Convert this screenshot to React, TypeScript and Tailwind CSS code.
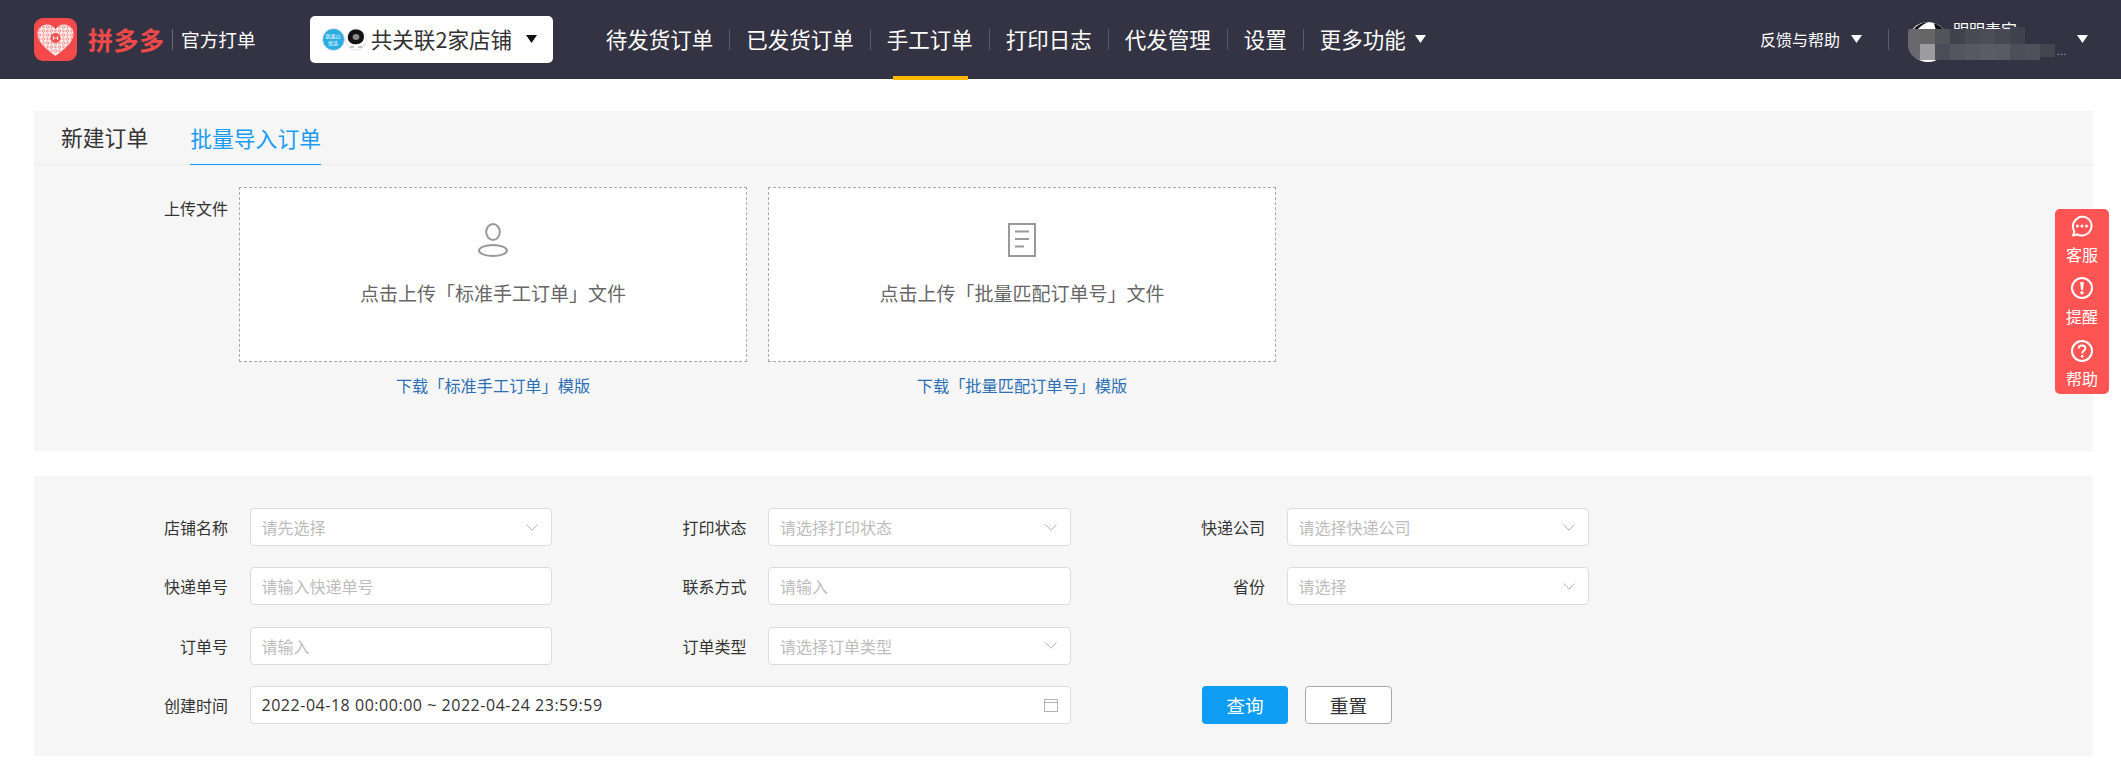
import React from 'react';

const Tri = ({ className = '', color = '#fff' }: { className?: string; color?: string }) => (
  <svg width="11" height="8" viewBox="0 0 11 8" className={className}>
    <polygon points="0,0 11,0 5.5,8" fill={color} />
  </svg>
);

const Chevron = () => (
  <svg width="12" height="7" viewBox="0 0 12 7" className="shrink-0" fill="none" stroke="#b4b4b4" strokeWidth="1">
    <path d="M0.5 0.5 L6 6.2 L11.5 0.5" />
  </svg>
);

const Logo = () => {
  const dots: React.ReactNode[] = [];
  for (let r = 0; r < 7; r++) {
    for (let c = 0; c < 9; c++) {
      const cx = 5.5 + c * 4;
      const cy = 9 + r * 4;
      dots.push(<circle key={`${r}-${c}`} cx={cx} cy={cy} r={(r + c) % 2 ? 0.8 : 1.3} fill="none" stroke="#f3605c" strokeWidth="0.6" />);
    }
  }
  return (
    <svg width="43" height="43" viewBox="0 0 43 43" className="shrink-0">
      <rect width="43" height="43" rx="9" fill="#f4494a" />
      <clipPath id="hrt">
        <path d="M21.5 38 C16 33.5 3.5 26 3.5 15.5 C3.5 10 8 6.5 13 6.5 C16.5 6.5 19.7 8.4 21.5 11 C23.3 8.4 26.5 6.5 30 6.5 C35 6.5 39.5 10 39.5 15.5 C39.5 26 27 33.5 21.5 38 Z" />
      </clipPath>
      <g clipPath="url(#hrt)">
        <rect width="43" height="43" fill="#fdeae8" />
        {dots}
        <circle cx="21.5" cy="20" r="5" fill="#f0524f" />
        <path d="M19.5 18 V22 M23.5 18 V22 M18.5 20 H24.5" stroke="#fde4e1" strokeWidth="0.9" />
      </g>
    </svg>
  );
};

const ShopAvatars = () => (
  <div className="flex items-center shrink-0">
    <div className="w-[23px] h-[23px] rounded-full bg-[#2aade3] border border-[#e6e6e6] flex flex-col items-center justify-center text-white text-[5px] leading-[7px]">
      <span>蔬果山</span>
      <span>优选</span>
    </div>
    <svg width="22" height="23" viewBox="0 0 22 23" className="shrink-0">
      <circle cx="11" cy="11.5" r="10.5" fill="#fff" stroke="#e4e4e4" />
      <path d="M3 8 C4 2 9 1 12 1.5 C18 2 20 7 18.5 11.5 C17 16 11 17 8 16 C4.5 15 2 11.5 3 8 Z" fill="#111" />
      <ellipse cx="11" cy="9" rx="3.4" ry="3" fill="#8a8a8a" />
      <path d="M5 19 H9 M13 19 H17" stroke="#888" strokeWidth="1.2" />
    </svg>
  </div>
);

const Mosaic = () => {
  const row1 = ['#666666', '#53535a', '#42424f', '#4a4a56', '#4d4d59', '#484855', '#42424f'];
  const row2 = ['#9c9ca0', '#4c4c58', '#55555f', '#585862', '#5c5c66', '#5a5a64', '#4e4e5a', '#50505c', '#45454f'];
  return (
    <svg width="150" height="34" viewBox="0 0 150 34" className="absolute left-0 top-[27px]">
      <path d="M12 2 H0.5 C-0.5 8 0 12 0 17 C0 24 3 30 12 33 Z" fill="#68686e" />
      {row1.map((c, i) => (
        <rect key={i} x={12 + i * 15} y={i > 5 ? 0 : 2} width="15" height={i > 5 ? 17 : 15} fill={c} />
      ))}
      {row2.map((c, i) => (
        <rect key={i} x={12 + i * 15} y="17" width="15" height={i === 8 ? 13 : 16} fill={c} />
      ))}
    </svg>
  );
};

const navItems = ['待发货订单', '已发货订单', '手工订单', '打印日志', '代发管理', '设置'];

const Header = () => (
  <header className="h-[79px] bg-[#343343] flex items-center pl-[34px] pr-[33px] pb-px text-white">
    <Logo />
    <span className="ml-[11px] text-[25px] leading-[25px] font-bold text-[#ee4a4a] w-[76px] whitespace-nowrap tracking-[0.5px]">拼多多</span>
    <span className="ml-[8px] w-px h-[21px] bg-[#6a6a76]" />
    <span className="ml-[8px] text-[18.67px] leading-[24px] whitespace-nowrap">官方打单</span>
    <div className="ml-[54px] w-[243px] h-[47px] bg-white rounded-[5px] flex items-center pl-[12px] text-[#333]">
      <ShopAvatars />
      <span className="ml-[4px] text-[21.6px] leading-[28px] whitespace-nowrap">共关联2家店铺</span>
      <Tri className="ml-[14px]" color="#111" />
    </div>
    <nav className="ml-[37px] flex items-center">
      {navItems.map((t, i) => (
        <div key={t} className="relative px-4 h-[21px] flex items-center text-[21.5px] border-r border-[#5d5d6a] whitespace-nowrap">
          {t}
          {i === 2 && <span className="absolute left-[22px] right-[21px] top-[47px] h-1 bg-[#ffba00]" />}
        </div>
      ))}
      <div className="pl-4 flex items-center text-[21.5px] whitespace-nowrap">
        更多功能
        <Tri className="ml-[9px]" />
      </div>
    </nav>
    <div className="ml-auto flex items-center text-[16px] whitespace-nowrap">
      <span>反馈与帮助</span>
      <Tri className="ml-[11px]" />
      <span className="ml-[26px] w-px h-[21px] bg-[#5d5d6a]" />
      <div className="relative ml-[19px] w-[170px] h-[79px] flex items-start">
        <svg width="40" height="40" viewBox="0 0 40 40" className="absolute left-0 top-[22px]">
          <circle cx="20" cy="20" r="20" fill="#fff" />
          <path d="M2 14 C5 5 12 1 20 0 C14 3 9 6 6 14 Z" fill="#111" />
          <path d="M26 1 C31 3 34 5 36 9 L28 9 Z" fill="#111" />
        </svg>
        <span className="absolute left-[45px] top-[18px] text-[16px] leading-[22px]">明明麦宝</span>
        <span className="absolute left-[149px] top-[46px] text-[10px] leading-[10px] text-[#aaa] tracking-[0.5px]">...</span>
        <Mosaic />
      </div>
      <Tri className="-ml-[1px]" />
    </div>
  </header>
);

const UploadCard = ({ icon, text, link }: { icon: React.ReactNode; text: string; link: string }) => (
  <div className="flex flex-col items-center w-[508px]">
    <div className="w-[508px] h-[175px] bg-white border border-dashed border-[#a9a9a9] flex flex-col items-center pt-[35px]">
      {icon}
      <span className="mt-[24px] text-[19px] leading-[24px] text-[#666]">{text}</span>
    </div>
    <a className="mt-[12px] text-[16.2px] leading-[22px] text-[#2c6fb5]">{link}</a>
  </div>
);

const PersonIcon = () => (
  <svg width="32" height="34" viewBox="0 0 32 34" fill="none" stroke="#999" strokeWidth="2">
    <ellipse cx="16" cy="9" rx="6.8" ry="8" />
    <ellipse cx="16" cy="27.5" rx="14" ry="5.5" />
  </svg>
);

const DocIcon = () => (
  <svg width="28" height="34" viewBox="0 0 28 34" fill="none" stroke="#999" strokeWidth="2">
    <rect x="1" y="1" width="26" height="32" />
    <path d="M7 8.5 H21 M7 16 H21 M7 23.5 H16" />
  </svg>
);

const Label = ({ children }: { children: React.ReactNode }) => (
  <label className="w-[194px] shrink-0 text-right text-[16px] leading-[38px] text-[#333]">{children}</label>
);

const boxCls = 'h-[38px] bg-white border border-[#dcdcdc] rounded-[4px] flex items-center text-[16px] shrink-0';

const SelectField = ({ label, ph }: { label: string; ph: string }) => (
  <div className="flex">
    <Label>{label}</Label>
    <div className={`${boxCls} ml-[21.5px] w-[302.5px] pl-[11px] pr-[13px] justify-between`}>
      <span className="text-[#bcbcbc]">{ph}</span>
      <Chevron />
    </div>
  </div>
);

const InputField = ({ label, ph }: { label: string; ph: string }) => (
  <div className="flex">
    <Label>{label}</Label>
    <input
      readOnly
      placeholder={ph}
      className={`${boxCls} ml-[21.5px] w-[302.5px] pl-[11px] outline-none placeholder:text-[#bcbcbc]`}
    />
  </div>
);

const CircleIcon = ({ children }: { children: React.ReactNode }) => (
  <svg width="24" height="24" viewBox="0 0 24 24" fill="none" stroke="#fff" strokeWidth="2">
    {children}
  </svg>
);

const SideBar = () => (
  <aside className="absolute left-[2055px] top-[209px] w-[54px] h-[185px] bg-[#ff5454] rounded-[5px] flex flex-col items-center pt-[5px] text-white text-[16px]">
    <CircleIcon>
      <path d="M3 21.5 L4.3 17.6 C2.3 13.4 2.6 8.6 6 5.4 C10 1.6 15.5 1.8 19 5.4 C22.6 9 22.4 15 18.8 18.6 C15.6 21.8 10.6 22.3 7 20.5 Z" strokeLinejoin="round" />
      <circle cx="7.5" cy="12" r="1.5" fill="#fff" stroke="none" />
      <circle cx="12" cy="12" r="1.5" fill="#fff" stroke="none" />
      <circle cx="16.5" cy="12" r="1.5" fill="#fff" stroke="none" />
    </CircleIcon>
    <span className="leading-[22px] mt-[5px]">客服</span>
    <div className="mt-[11px] h-[24px]">
      <CircleIcon>
        <circle cx="12" cy="12" r="10" />
        <path d="M10.2 6 H13.8 L13 14 H11 Z" fill="#fff" stroke="none" />
        <circle cx="12" cy="16.8" r="1.7" fill="#fff" stroke="none" />
      </CircleIcon>
    </div>
    <span className="leading-[22px] mt-[5px]">提醒</span>
    <div className="mt-[12px] h-[24px]">
      <CircleIcon>
        <circle cx="12" cy="12" r="10" />
        <path d="M8.6 9.6 C8.6 7.6 10.2 6.5 12 6.5 C14 6.5 15.4 7.8 15.4 9.4 C15.4 11.8 12.2 11.9 12.2 14.4" strokeWidth="1.9" />
        <circle cx="12.2" cy="17.4" r="1.3" fill="#fff" stroke="none" />
      </CircleIcon>
    </div>
    <span className="leading-[22px] mt-[4px]">帮助</span>
  </aside>
);

export default function App() {
  return (
    <div className="relative w-[2121px] h-[778px] overflow-hidden bg-white font-['Noto_Sans_CJK_SC','Noto_Sans',sans-serif]">
      <Header />
      <main className="ml-[34px] mr-[28px]">
        <section className="mt-[32px] h-[340px] bg-[#f6f6f6]">
          <div className="h-[54px] border-b border-[#ececec] flex items-end pl-[27px] gap-[42px] text-[21.8px]">
            <button className="h-[54px] leading-[54px] text-[#333]">新建订单</button>
            <button className="h-[54px] leading-[54px] text-[#1b9cf2] border-b border-[#0f9cf3] -mb-px">批量导入订单</button>
          </div>
          <div className="flex pt-[22px]">
            <label className="w-[194px] text-right text-[16px] leading-[22px] text-[#333] pt-[10px]">上传文件</label>
            <div className="ml-[11px] flex gap-[21px]">
              <UploadCard icon={<PersonIcon />} text="点击上传「标准手工订单」文件" link="下载「标准手工订单」模版" />
              <UploadCard icon={<DocIcon />} text="点击上传「批量匹配订单号」文件" link="下载「批量匹配订单号」模版" />
            </div>
          </div>
        </section>
        <section className="mt-[25px] h-[280px] bg-[#f6f6f6] pt-[32px]">
          <div className="grid grid-cols-[518.5px_518.5px_518.5px] gap-y-[21.3px]">
            <SelectField label="店铺名称" ph="请先选择" />
            <SelectField label="打印状态" ph="请选择打印状态" />
            <SelectField label="快递公司" ph="请选择快递公司" />
            <InputField label="快递单号" ph="请输入快递单号" />
            <InputField label="联系方式" ph="请输入" />
            <SelectField label="省份" ph="请选择" />
            <InputField label="订单号" ph="请输入" />
            <SelectField label="订单类型" ph="请选择订单类型" />
            <div />
            <div className="col-span-2 flex">
              <Label>创建时间</Label>
              <div className={`${boxCls} ml-[21.5px] w-[821px] pl-[11px] pr-[12px] justify-between text-[#333]`}>
                <span className="font-['Open_Sans',sans-serif] tracking-[0.53px]">2022-04-18 00:00:00 ~ 2022-04-24 23:59:59</span>
                <svg width="14" height="14" viewBox="0 0 14 14" fill="none" stroke="#b4b4b4" strokeWidth="1">
                  <rect x="0.5" y="1.5" width="13" height="12" />
                  <path d="M0.5 4.5 H13.5" />
                </svg>
              </div>
            </div>
            <div className="flex ml-[131px] gap-[17px]">
              <button className="w-[86px] h-[38px] rounded-[4px] bg-[#0f9cf3] text-white text-[18.67px]">查询</button>
              <button className="w-[87px] h-[38px] rounded-[4px] bg-white border border-[#aaaaaa] text-[#333] text-[18.67px]">重置</button>
            </div>
          </div>
        </section>
      </main>
      <SideBar />
    </div>
  );
}
